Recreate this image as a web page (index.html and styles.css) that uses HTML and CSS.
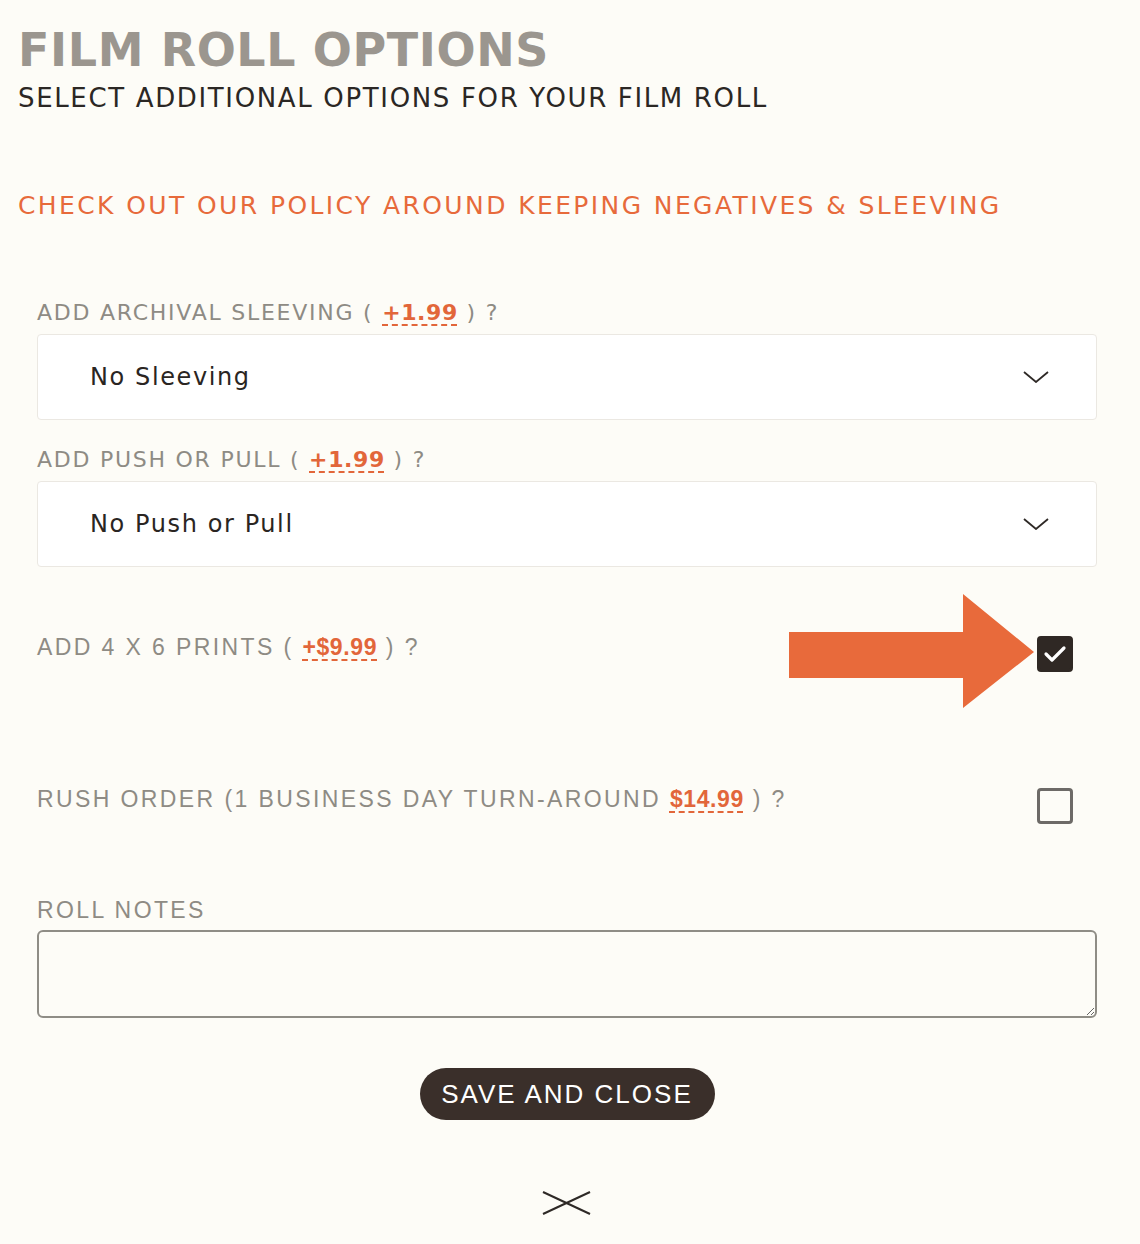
FILE: index.html
```html
<!DOCTYPE html>
<html lang="en">
<head>
<meta charset="utf-8">
<title>Film Roll Options</title>
<link rel="stylesheet" href="styles.css">
</head>
<body>
<main class="page">
  <h1 class="title">FILM ROLL OPTIONS</h1>
  <p class="subtitle">SELECT ADDITIONAL OPTIONS FOR YOUR FILM ROLL</p>
  <a class="policy" href="#policy">CHECK OUT OUR POLICY AROUND KEEPING NEGATIVES &amp; SLEEVING</a>

  <form class="form">
    <div class="label label-wide first">ADD ARCHIVAL SLEEVING ( <span class="price">+1.99</span> ) ?</div>
    <div class="select">
      <span class="select-text">No Sleeving</span>
      <svg class="chevron" width="26" height="12" viewBox="0 0 26 12"><polyline points="1,1 13,11 25,1" fill="none" stroke="#2e2926" stroke-width="1.8"/></svg>
    </div>

    <div class="label label-wide second">ADD PUSH OR PULL ( <span class="price">+1.99</span> ) ?</div>
    <div class="select">
      <span class="select-text">No Push or Pull</span>
      <svg class="chevron" width="26" height="12" viewBox="0 0 26 12"><polyline points="1,1 13,11 25,1" fill="none" stroke="#2e2926" stroke-width="1.8"/></svg>
    </div>

    <div class="check-row prints">
      <div class="label label-narrow">ADD 4 X 6 PRINTS ( <span class="price">+$9.99</span> ) ?</div>
      <span class="box checked">
        <svg width="24" height="20" viewBox="0 0 24 20"><polyline points="3,10 9,16 21,4" fill="none" stroke="#ffffff" stroke-width="3.2" stroke-linecap="round" stroke-linejoin="round"/></svg>
      </span>
      <svg class="arrow" width="246" height="114" viewBox="0 0 246 114"><polygon points="0,38 174,38 174,0 245,58 174,114 174,84 0,84" fill="#e86a3b"/></svg>
    </div>

    <div class="check-row rush">
      <div class="label label-narrow">RUSH ORDER (1 BUSINESS DAY TURN-AROUND <span class="price">$14.99</span> ) ?</div>
      <span class="box"></span>
    </div>

    <div class="label label-narrow notes-label">ROLL NOTES</div>
    <textarea class="notes"></textarea>

    <div class="actions">
      <button type="button" class="save">SAVE AND CLOSE</button>
    </div>
    <div class="close-wrap">
      <svg class="close" width="50" height="26" viewBox="0 0 50 26"><line x1="1" y1="2" x2="48" y2="24" stroke="#2e2926" stroke-width="2"/><line x1="1" y1="24" x2="48" y2="2" stroke="#2e2926" stroke-width="2"/></svg>
    </div>
  </form>
</main>
</body>
</html>
```

FILE: styles.css
```css
html, body {
  margin: 0;
  padding: 0;
  background: #fdfcf7;
}

.page {
  padding: 27px 0 0 18px;
  width: 1122px;
}

.title {
  margin: 0;
  font: bold 46px/1 "DejaVu Sans", sans-serif;
  letter-spacing: 0.6px;
  color: #9b968f;
}

.subtitle {
  margin: 12px 0 0;
  font: 26px/1 "DejaVu Sans", sans-serif;
  letter-spacing: 1.65px;
  color: #2b2724;
}

.policy {
  display: block;
  margin-top: 82px;
  font: 25px/1 "DejaVu Sans", sans-serif;
  letter-spacing: 2.4px;
  color: #e76a3b;
  text-decoration: none;
}

.form {
  margin: 84px 0 0 19px;
  width: 1060px;
  display: flex;
  flex-direction: column;
}

.label {
  color: #8e8b84;
  line-height: 1;
}

.label-wide {
  font: 22px/1 "DejaVu Sans", sans-serif;
  letter-spacing: 1.75px;
}

.label-narrow {
  font: 23px/1 "Liberation Sans", sans-serif;
  letter-spacing: 2.4px;
}

.second {
  margin-top: 29px;
}

.price {
  color: #e2663a;
  font-weight: bold;
  letter-spacing: 0.6px;
  text-decoration: underline dashed;
  text-underline-offset: 4px;
  text-decoration-thickness: 1.5px;
}

.select {
  margin-top: 10px;
  height: 86px;
  box-sizing: border-box;
  background: #ffffff;
  border: 1px solid #ebe8e2;
  border-radius: 4px;
  display: flex;
  align-items: center;
  justify-content: space-between;
  padding: 0 47px 0 52px;
}

.select-text {
  font: 24px/1 "DejaVu Sans", sans-serif;
  letter-spacing: 1.6px;
  color: #2a2522;
}

.chevron {
  display: block;
}

.check-row {
  position: relative;
  display: flex;
  justify-content: space-between;
  align-items: flex-start;
  padding-right: 24px;
}

.check-row .label {
  margin-top: 0;
}

.prints {
  margin-top: 69px;
}

.rush {
  margin-top: 116px;
}

.box {
  width: 36px;
  height: 36px;
  box-sizing: border-box;
  border: 3px solid #6d6a67;
  border-radius: 4px;
  display: flex;
  align-items: center;
  justify-content: center;
}

.box.checked {
  background: #2f2824;
  border-color: #2f2824;
}

.arrow {
  position: absolute;
  left: 752px;
  top: -42px;
}

.notes-label {
  margin-top: 75px;
}

.notes {
  margin-top: 8px;
  height: 88px;
  width: 1060px;
  box-sizing: border-box;
  background: #fdfcf7;
  border: 2px solid #8f8d86;
  border-radius: 6px;
  display: block;
}

.actions {
  margin-top: 50px;
  display: flex;
  justify-content: center;
}

.save {
  height: 52px;
  width: 295px;
  border: none;
  border-radius: 26px;
  background: #3a2f2a;
  color: #ffffff;
  font: 26px/1 "Liberation Sans", sans-serif;
  letter-spacing: 2px;
  padding: 0;
}

.close-wrap {
  margin-top: 70px;
  display: flex;
  justify-content: center;
}

.close {
  display: block;
}
```
